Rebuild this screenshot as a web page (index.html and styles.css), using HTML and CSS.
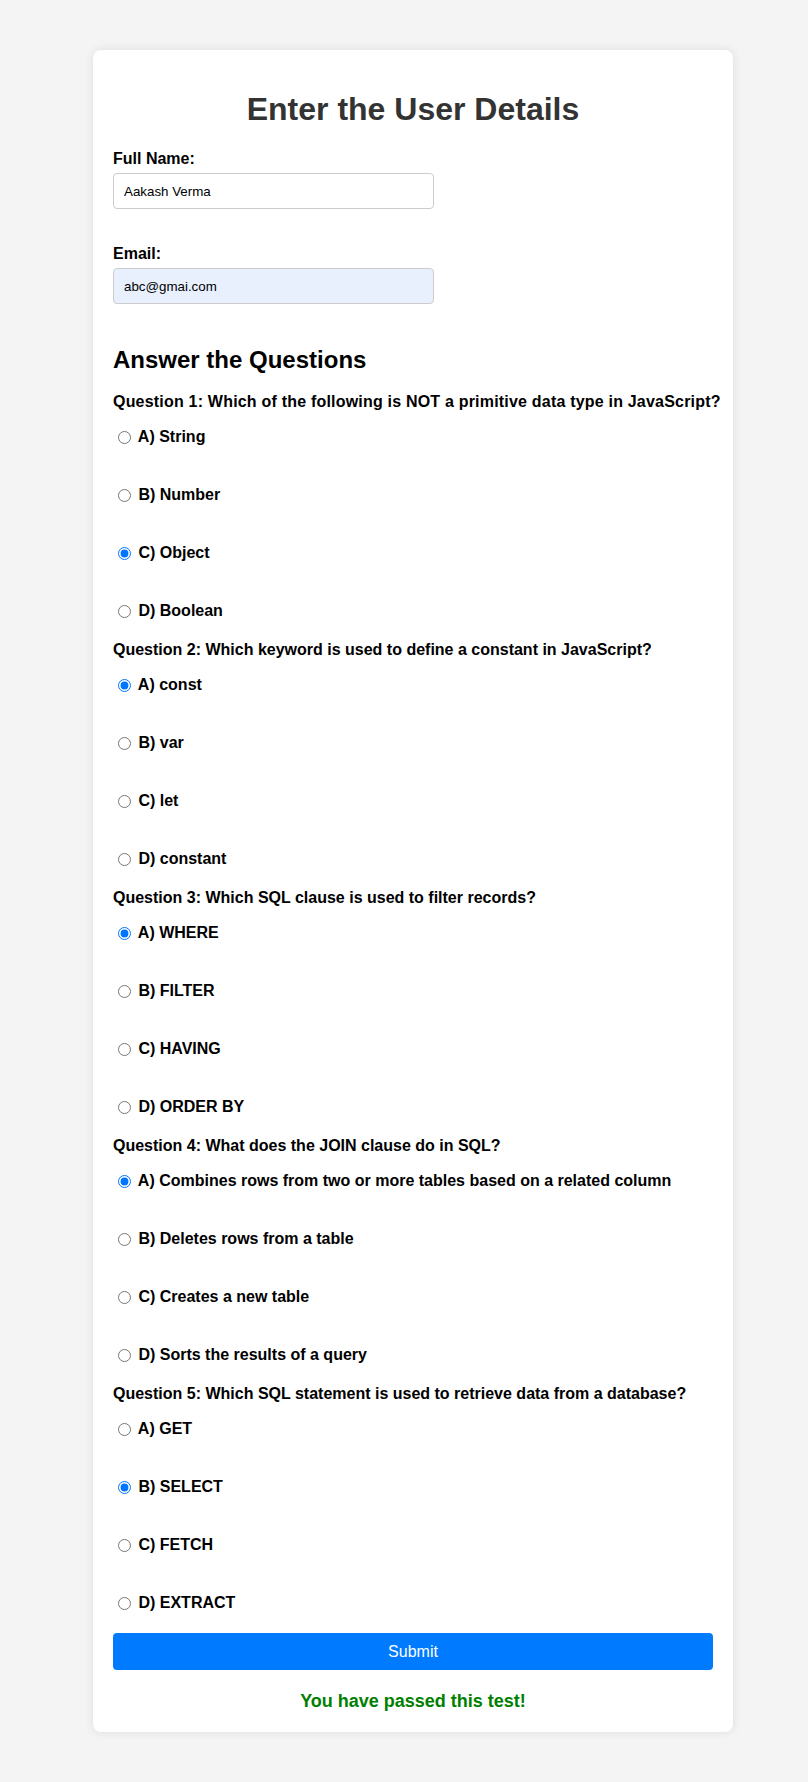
FILE: index.html
```html
<!DOCTYPE html>
<html lang="en">
<head>
<meta charset="UTF-8">
<title>Quiz</title>
<link rel="stylesheet" href="styles.css">
</head>
<body>
<div class="card">
  <h1 class="title">Enter the User Details</h1>
  <div class="field">
    <label class="field-label" for="name">Full Name:</label>
    <input class="text-input" id="name" type="text" value="Aakash Verma">
  </div>
  <div class="field">
    <label class="field-label" for="email">Email:</label>
    <input class="text-input autofilled" id="email" type="email" value="abc@gmai.com">
  </div>

  <h2 class="section-title">Answer the Questions</h2>

  <div class="question-block">
    <div class="q-text q-wide">Question 1: Which of the following is NOT a primitive data type in JavaScript?</div>
    <label class="option"><input type="radio" name="q1"> A) String</label>
    <label class="option"><input type="radio" name="q1"> B) Number</label>
    <label class="option"><input type="radio" name="q1" checked> C) Object</label>
    <label class="option"><input type="radio" name="q1"> D) Boolean</label>
  </div>

  <div class="question-block">
    <div class="q-text">Question 2: Which keyword is used to define a constant in JavaScript?</div>
    <label class="option"><input type="radio" name="q2" checked> A) const</label>
    <label class="option"><input type="radio" name="q2"> B) var</label>
    <label class="option"><input type="radio" name="q2"> C) let</label>
    <label class="option"><input type="radio" name="q2"> D) constant</label>
  </div>

  <div class="question-block">
    <div class="q-text">Question 3: Which SQL clause is used to filter records?</div>
    <label class="option"><input type="radio" name="q3" checked> A) WHERE</label>
    <label class="option"><input type="radio" name="q3"> B) FILTER</label>
    <label class="option"><input type="radio" name="q3"> C) HAVING</label>
    <label class="option"><input type="radio" name="q3"> D) ORDER BY</label>
  </div>

  <div class="question-block">
    <div class="q-text">Question 4: What does the JOIN clause do in SQL?</div>
    <label class="option"><input type="radio" name="q4" checked> A) Combines rows from two or more tables based on a related column</label>
    <label class="option"><input type="radio" name="q4"> B) Deletes rows from a table</label>
    <label class="option"><input type="radio" name="q4"> C) Creates a new table</label>
    <label class="option"><input type="radio" name="q4"> D) Sorts the results of a query</label>
  </div>

  <div class="question-block">
    <div class="q-text">Question 5: Which SQL statement is used to retrieve data from a database?</div>
    <label class="option"><input type="radio" name="q5"> A) GET</label>
    <label class="option"><input type="radio" name="q5" checked> B) SELECT</label>
    <label class="option"><input type="radio" name="q5"> C) FETCH</label>
    <label class="option"><input type="radio" name="q5"> D) EXTRACT</label>
  </div>

  <button class="submit" type="button">Submit</button>
  <div class="result">You have passed this test!</div>
</div>
</body>
</html>
```
FILE: styles.css
```css
html, body {
  margin: 0;
}
body {
  background: #f4f4f4;
  font-family: "Liberation Sans", Arial, sans-serif;
  padding: 50px 0 50px 18px;
  color: #000;
}
.card {
  width: 600px;
  margin: 0 auto;
  padding: 20px;
  background: #fff;
  border-radius: 8px;
  box-shadow: 0 0 10px rgba(0, 0, 0, 0.1);
}
.title {
  margin: 21px 0 22px;
  font-size: 32px;
  line-height: 37px;
  font-weight: bold;
  color: #333;
  text-align: center;
}
.field {
  margin-bottom: 36px;
}
.field-label {
  display: block;
  font-size: 16px;
  line-height: 18px;
  font-weight: bold;
  margin-bottom: 5px;
}
.text-input {
  display: block;
  box-sizing: border-box;
  width: 321px;
  height: 36px;
  padding: 0 10px;
  margin: 0;
  border: 1px solid #ccc;
  border-radius: 4px;
  font-family: "Liberation Sans", Arial, sans-serif;
  font-size: 13.333px;
  color: #000;
  background: #fff;
}
.text-input.autofilled {
  background: #e8f0fe;
}
.section-title {
  margin: 42px 0 19px;
  font-size: 24px;
  line-height: 28px;
  font-weight: bold;
}
.question-block {
  margin-bottom: 21px;
}
.q-text {
  font-size: 16px;
  line-height: 18px;
  font-weight: bold;
  margin-bottom: 17px;
  white-space: nowrap;
}
.q-wide {
  letter-spacing: 0.2px;
}
.option {
  display: flex;
  align-items: center;
  height: 18px;
  font-size: 16px;
  font-weight: bold;
  margin-bottom: 40px;
  white-space: pre;
}
.option:last-child {
  margin-bottom: 0;
}
.option input {
  margin: 0 3px 0 5px;
  width: 13px;
  height: 13px;
}
.submit {
  display: block;
  width: 100%;
  height: 37px;
  margin-top: 1px;
  border: none;
  border-radius: 4px;
  background: #007bff;
  color: #fff;
  font-family: "Liberation Sans", Arial, sans-serif;
  font-size: 16px;
}
.result {
  margin-top: 21px;
  font-size: 18px;
  line-height: 21px;
  font-weight: bold;
  color: green;
  text-align: center;
}
```
